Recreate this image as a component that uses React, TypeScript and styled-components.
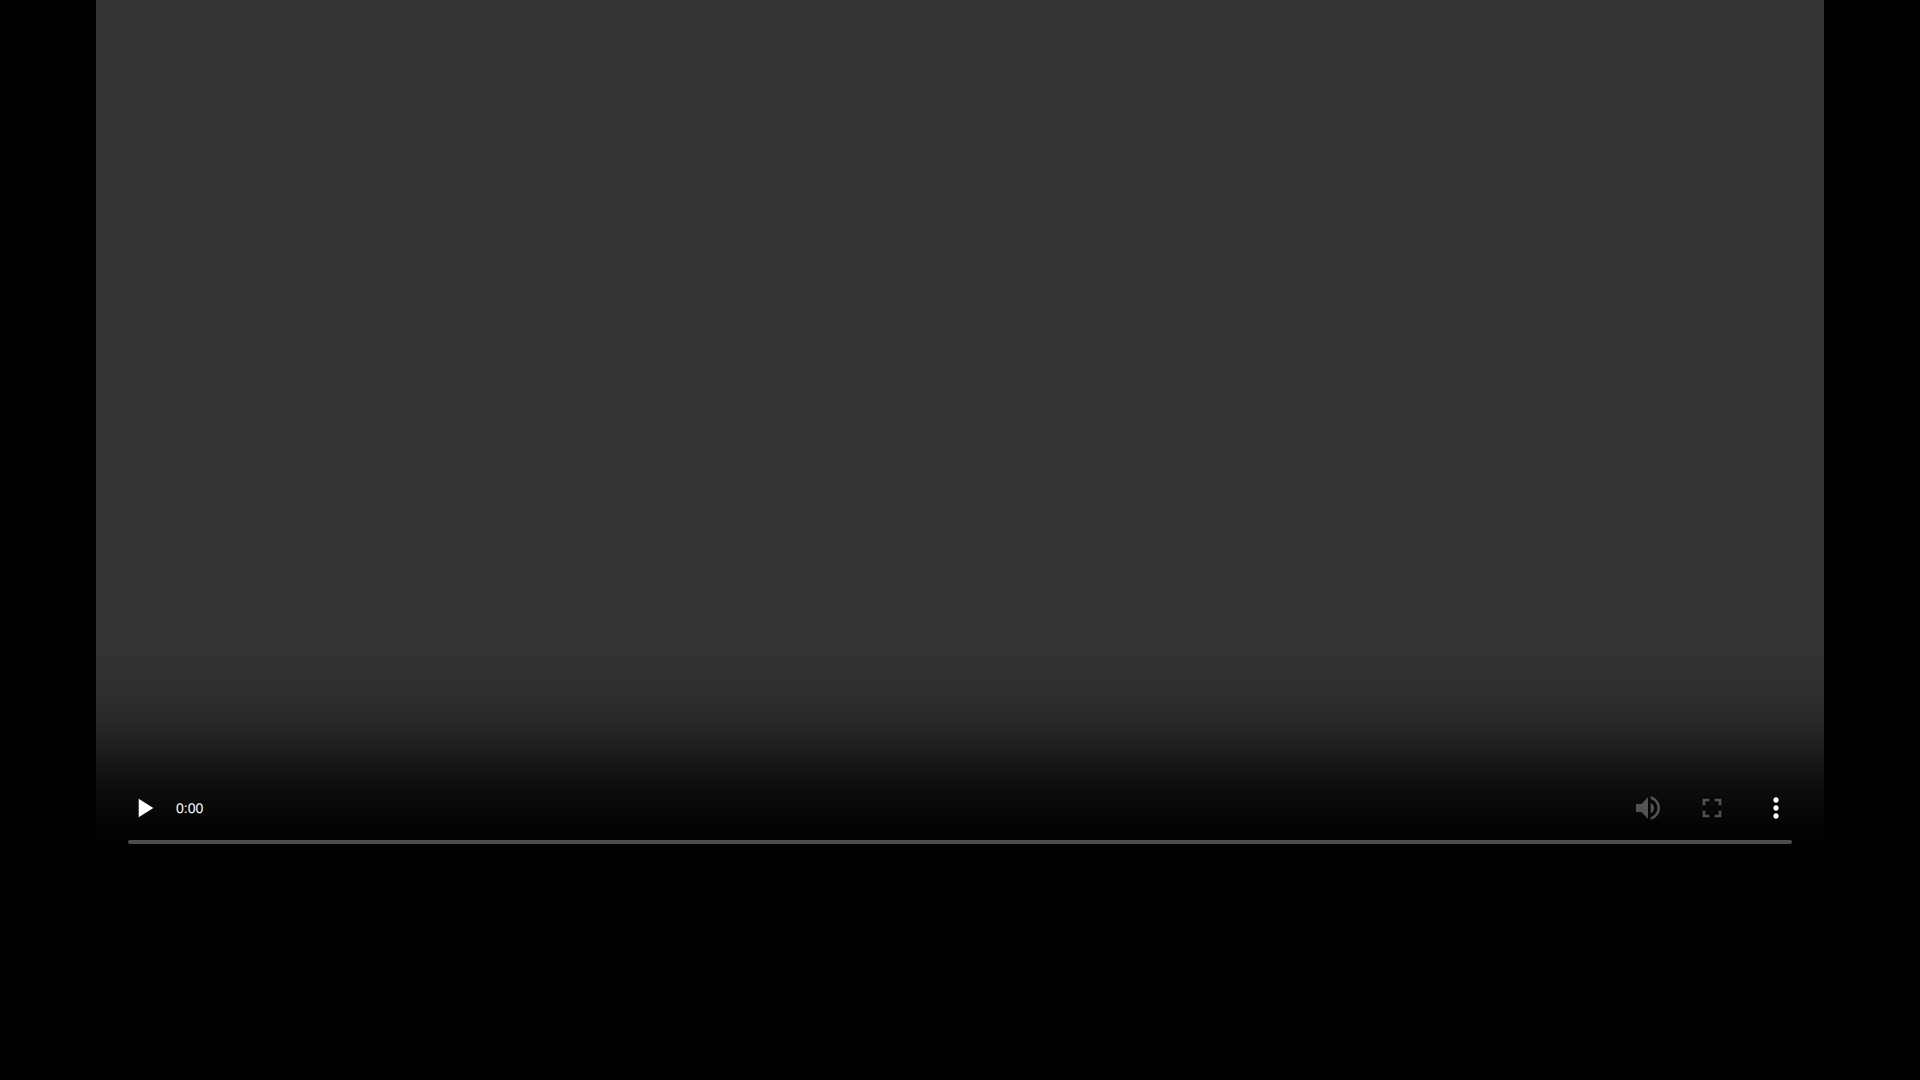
import React from "react";
import styled, { createGlobalStyle } from "styled-components";

const GlobalStyle = createGlobalStyle`
  html, body { margin: 0; background: #000; }
  *, *::before, *::after { box-sizing: border-box; }
`;

const Page = styled.main`
  min-height: 100vh;
  background: #000;
`;

const Player = styled.section`
  display: flex;
  flex-direction: column;
  justify-content: flex-end;
  width: 90%;
  height: 80vh;
  margin: 0 auto;
  background: #333;
  color: #fff;
`;

const Controls = styled.div`
  display: flex;
  flex-direction: column;
  justify-content: flex-end;
  height: 216px;
  padding: 0 32px 20px;
  background: linear-gradient(
    to bottom,
    rgba(0, 0, 0, 0) 0%,
    rgba(0, 0, 0, 0.03) 13%,
    rgba(0, 0, 0, 0.1) 23%,
    rgba(0, 0, 0, 0.22) 34%,
    rgba(0, 0, 0, 0.4) 45%,
    rgba(0, 0, 0, 0.6) 56%,
    rgba(0, 0, 0, 0.78) 67%,
    rgba(0, 0, 0, 0.9) 78%,
    rgba(0, 0, 0, 0.98) 89%,
    #000 100%
  );
`;

const ButtonRow = styled.div`
  display: flex;
  align-items: center;
  gap: 32px;
  margin-bottom: 16px;
`;

const Time = styled.time`
  flex: 1;
  margin-left: -16px;
  font: 14px/32px "Liberation Sans", Arial, sans-serif;
  text-rendering: geometricPrecision;
`;

const IconButton = styled.button`
  display: flex;
  width: 32px;
  height: 32px;
  padding: 0;
  border: 0;
  background: none;
  color: #fff;
  cursor: pointer;

  &:disabled {
    opacity: 0.3;
    cursor: default;
  }
`;

const Icon = styled.svg`
  width: 32px;
  height: 32px;
  fill: currentColor;
`;

const Timeline = styled.input`
  appearance: none;
  display: block;
  width: 100%;
  height: 4px;
  margin: 0;
  border-radius: 2px;
  background: rgba(255, 255, 255, 0.3);

  &::-webkit-slider-thumb {
    appearance: none;
    width: 0;
    height: 0;
  }
`;

type ControlProps = { label: string; path: string; disabled?: boolean };

const Control = ({ label, path, disabled }: ControlProps) => (
  <IconButton type="button" aria-label={label} disabled={disabled}>
    <Icon viewBox="0 0 24 24" aria-hidden="true">
      <path d={path} />
    </Icon>
  </IconButton>
);

export default function App() {
  return (
    <Page>
      <GlobalStyle />
      <Player aria-label="Video player">
        <Controls>
          <ButtonRow>
            <Control label="Play" path="M8 5v14l11-7z" />
            <Time>0:00</Time>
            <Control
              label="Mute"
              disabled
              path="M3 9v6h4l5 5V4L7 9H3zm13.5 3c0-1.77-1.02-3.29-2.5-4.03v8.05c1.48-.73 2.5-2.25 2.5-4.02zM14 3.23v2.06c2.89.86 5 3.54 5 6.71s-2.11 5.85-5 6.71v2.06c4.01-.91 7-4.49 7-8.77s-2.99-7.86-7-8.77z"
            />
            <Control
              label="Full screen"
              disabled
              path="M7 14H5v5h5v-2H7v-3zm-2-4h2V7h3V5H5v5zm12 7h-3v2h5v-5h-2v3zM14 5v2h3v3h2V5h-5z"
            />
            <Control
              label="More options"
              path="M12 8c1.1 0 2-.9 2-2s-.9-2-2-2-2 .9-2 2 .9 2 2 2zm0 2c-1.1 0-2 .9-2 2s.9 2 2 2 2-.9 2-2-.9-2-2-2zm0 6c-1.1 0-2 .9-2 2s.9 2 2 2 2-.9 2-2-.9-2-2-2z"
            />
          </ButtonRow>
          <Timeline type="range" aria-label="Seek" min={0} max={100} defaultValue={0} />
        </Controls>
      </Player>
    </Page>
  );
}
